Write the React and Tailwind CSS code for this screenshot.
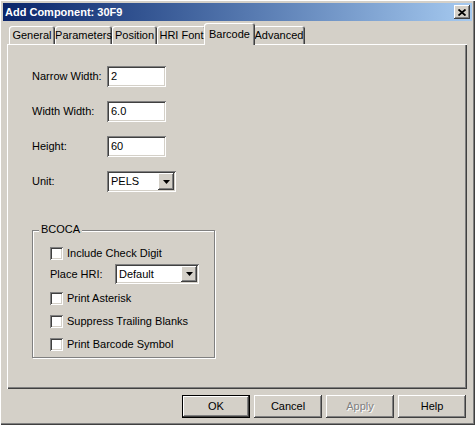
import React from "react";

const raised =
  "shadow-[inset_-1px_-1px_#404040,inset_1px_1px_#ffffff,inset_-2px_-2px_#808080,inset_2px_2px_#d4d0c8]";
const sunken =
  "shadow-[inset_1px_1px_#808080,inset_-1px_-1px_#ffffff,inset_2px_2px_#404040,inset_-2px_-2px_#d4d0c8]";

function Arrow() {
  return (
    <div className={`w-[16px] h-[17px] m-[2px] bg-[#d4d0c8] flex items-center justify-center ${raised}`}>
      <svg width="7" height="4" viewBox="0 0 7 4">
        <path d="M0 0H7L3.5 4Z" fill="#000" />
      </svg>
    </div>
  );
}

function Field({ label, value }) {
  return (
    <div className="flex items-center h-[21px]">
      <div className="w-[75px]">{label}</div>
      <div className={`w-[59px] h-[21px] bg-white pl-[4px] flex items-center ${sunken}`}>{value}</div>
    </div>
  );
}

function Check({ label }) {
  return (
    <div className="flex items-center h-[13px]">
      <div className={`w-[13px] h-[13px] bg-white ${sunken}`} />
      <div className="ml-[4px] leading-none">{label}</div>
    </div>
  );
}

function Tab({ label, w, selected }) {
  if (selected) {
    return (
      <div
        className={`relative z-10 h-[22px] -mb-px -mx-[2px] bg-[#d4d0c8] rounded-t-[3px] flex items-start justify-center pt-[3px] shadow-[inset_1px_1px_#ffffff,inset_-1px_0_#404040,inset_-2px_0_#808080]`}
        style={{ width: w + 4 }}
      >
        {label}
      </div>
    );
  }
  return (
    <div
      className="h-[18px] bg-[#d4d0c8] rounded-t-[3px] flex items-center justify-center shadow-[inset_1px_1px_#ffffff,inset_-1px_0_#404040,inset_-2px_0_#808080]"
      style={{ width: w }}
    >
      {label}
    </div>
  );
}

function Btn({ label, def, disabled }) {
  return (
    <div
      className={`w-[68px] h-[23px] flex items-center justify-center bg-[#d4d0c8] ${
        def ? "border border-black" : ""
      } ${raised} ${disabled ? "text-[#808080] [text-shadow:1px_1px_0_#ffffff]" : ""}`}
    >
      {label}
    </div>
  );
}

export default function App() {
  return (
    <div className="w-[475px] h-[425px] bg-[#d4d0c8] p-[3px] flex flex-col font-['Liberation_Sans',Arial,sans-serif] text-[11px] text-black shadow-[inset_1px_1px_#ffffff,inset_-1px_-1px_#404040,inset_-2px_-2px_#808080]">
      {/* Title bar */}
      <div className="h-[18px] bg-gradient-to-r from-[#0a246a] to-[#a6caf0] flex items-center justify-between pl-[2px] pr-[2px]">
        <div className="text-white font-bold text-[11px] leading-none">Add Component: 30F9</div>
        <div className={`w-[16px] h-[14px] bg-[#d4d0c8] flex items-center justify-center ${raised}`}>
          <svg width="8" height="7" viewBox="0 0 8 7">
            <path d="M0.5 0.5L7.5 6.5M7.5 0.5L0.5 6.5" stroke="#000" strokeWidth="1.8" />
          </svg>
        </div>
      </div>

      {/* Tabs */}
      <div className="ml-[4px] w-[460px] h-[23px] flex items-end pl-[2px]">
        <Tab label="General" w={46} />
        <Tab label="Parameters" w={57} />
        <Tab label="Position" w={45} />
        <Tab label="HRI Font" w={49} />
        <Tab label="Barcode" w={47} selected />
        <Tab label="Advanced" w={52} />
      </div>

      {/* Panel */}
      <div className="ml-[4px] w-[460px] h-[345px] shadow-[inset_1px_1px_#ffffff,inset_-1px_-1px_#404040,inset_-2px_-2px_#808080] pl-[25px] pt-[22px]">
        <div className="flex flex-col gap-[14px]">
          <Field label="Narrow Width:" value="2" />
          <Field label="Width Width:" value="6.0" />
          <Field label="Height:" value="60" />
          <div className="flex items-center h-[21px]">
            <div className="w-[75px]">Unit:</div>
            <div className={`w-[69px] h-[21px] bg-white pl-[4px] flex items-center justify-between ${sunken}`}>
              <span>PELS</span>
              <Arrow />
            </div>
          </div>
        </div>

        {/* Group box */}
        <div className="relative mt-[38px] w-[183px] h-[128px] border border-[#808080] shadow-[inset_1px_1px_#ffffff,1px_1px_#ffffff] pl-[17px] pt-[16px]">
          <div className="absolute -top-[7px] left-[6px] px-[2px] bg-[#d4d0c8] leading-none">BCOCA</div>
          <Check label="Include Check Digit" />
          <div className="flex items-center h-[20px] mt-[4px]">
            <div className="w-[65px]">Place HRI:</div>
            <div className={`w-[84px] h-[20px] bg-white pl-[4px] flex items-center justify-between ${sunken}`}>
              <span>Default</span>
              <div className={`w-[16px] h-[16px] m-[2px] bg-[#d4d0c8] flex items-center justify-center ${raised}`}>
                <svg width="7" height="4" viewBox="0 0 7 4">
                  <path d="M0 0H7L3.5 4Z" fill="#000" />
                </svg>
              </div>
            </div>
          </div>
          <div className="mt-[8px] flex flex-col gap-[10px]">
            <Check label="Print Asterisk" />
            <Check label="Suppress Trailing Blanks" />
            <Check label="Print Barcode Symbol" />
          </div>
        </div>
      </div>

      {/* Buttons */}
      <div className="mt-[6px] pl-[179px] flex gap-[4px]">
        <Btn label="OK" def />
        <Btn label="Cancel" />
        <Btn label="Apply" disabled />
        <Btn label="Help" />
      </div>
    </div>
  );
}
